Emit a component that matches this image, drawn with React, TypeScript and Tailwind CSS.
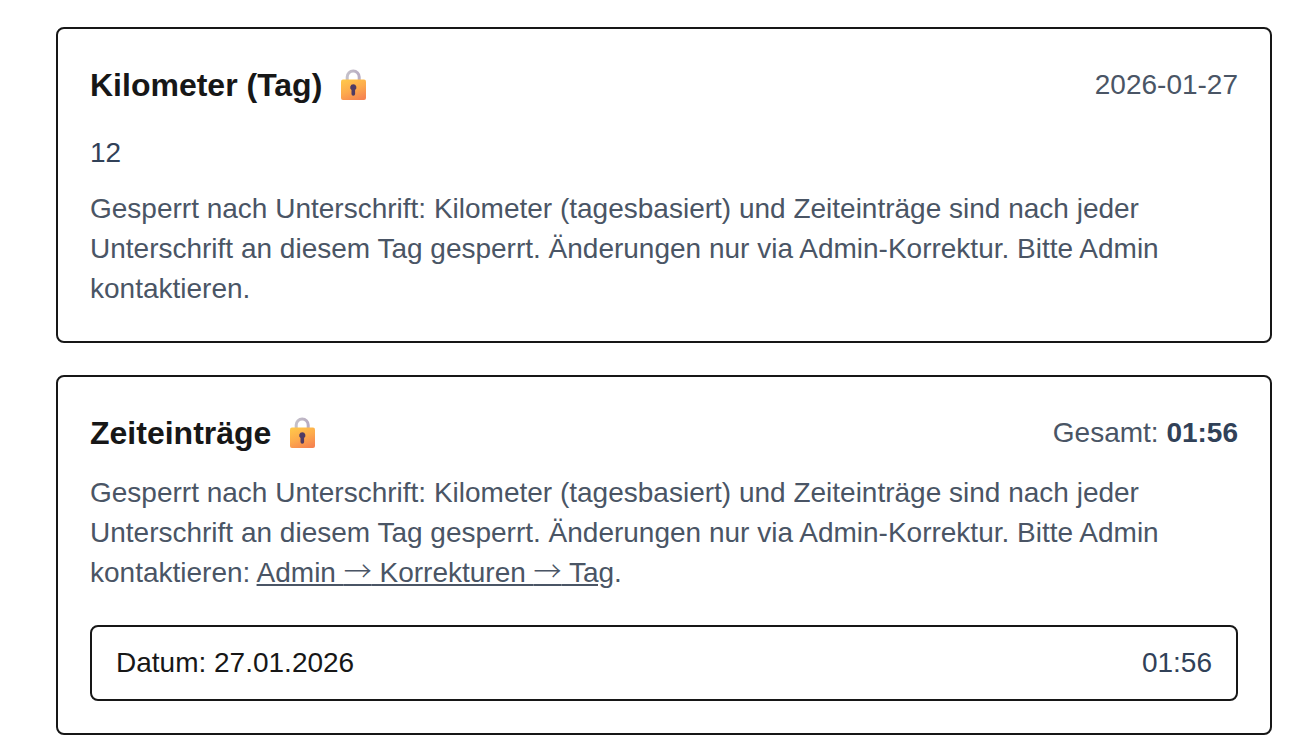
import { useId, type ReactNode } from "react";

const LOCK_NOTICE =
  "Gesperrt nach Unterschrift: Kilometer (tagesbasiert) und Zeiteinträge sind nach jeder Unterschrift an diesem Tag gesperrt. Änderungen nur via Admin-Korrektur. Bitte Admin kontaktieren";

const LockIcon = () => {
  const id = useId();

  return (
    <svg width="26" height="32" viewBox="0 0 26 32" role="img" aria-label="Gesperrt">
      <defs>
        <linearGradient id={`${id}-body`} x1="0.2" y1="0" x2="0.7" y2="1">
          <stop offset="0" stopColor="#ffc64a" />
          <stop offset="0.5" stopColor="#fdab4c" />
          <stop offset="1" stopColor="#f68450" />
        </linearGradient>
        <linearGradient id={`${id}-shackle`} x1="0" y1="0" x2="1" y2="0">
          <stop offset="0" stopColor="#c4c0c9" />
          <stop offset="1" stopColor="#b9adc2" />
        </linearGradient>
      </defs>
      <path
        d="M7.2 13V8a6 6 0 0 1 12 0v5"
        fill="none"
        stroke={`url(#${id}-shackle)`}
        strokeWidth="3"
      />
      <rect x="1" y="10.5" width="25" height="20.5" rx="2" fill={`url(#${id}-body)`} />
      <path
        d="M13.3 15.2a3.2 3.2 0 0 0-1.8 5.8v4a1.8 1.8 0 0 0 3.6 0v-4a3.2 3.2 0 0 0-1.8-5.8z"
        fill="#4f3b64"
      />
    </svg>
  );
};

// leading-none keeps the taller CJK metrics from stretching the line
const Arrow = () => (
  <span className="font-['Noto_Sans_CJK_JP',sans-serif] leading-none font-light">→</span>
);

type CardProps = {
  title: string;
  aside: ReactNode;
  children: ReactNode;
};

const Card = ({ title, aside, children }: CardProps) => (
  <section className="rounded-lg border-2 border-neutral-900 bg-white p-8">
    <div className="flex items-center justify-between">
      <h2 className="flex items-center gap-[18px] text-[32px] leading-[48px] font-semibold text-neutral-900">
        {title}
        <LockIcon />
      </h2>
      <div className="text-[#4a5565]">{aside}</div>
    </div>
    {children}
  </section>
);

const App = () => {
  return (
    <main className="flex flex-col gap-8 bg-white pt-[27px] pr-[29px] pl-14 font-['Liberation_Sans',Arial,sans-serif] text-[28px] leading-10">
      {/* Kilometers per day */}
      <Card title="Kilometer (Tag)" aside="2026-01-27">
        <div className="mt-6 text-slate-700">12</div>
        <p className="mt-4 text-[#4a5565]">{`${LOCK_NOTICE}.`}</p>
      </Card>

      {/* Time entries */}
      <Card
        title="Zeiteinträge"
        aside={
          <>
            Gesamt: <span className="font-semibold text-slate-700">01:56</span>
          </>
        }
      >
        <p className="mt-4 text-[#4a5565]">
          {`${LOCK_NOTICE}: `}
          <a href="#korrekturen" className="underline">
            Admin <Arrow /> Korrekturen <Arrow /> Tag
          </a>
          .
        </p>
        <div className="mt-8 flex items-center justify-between rounded-lg border-2 border-neutral-900 px-6 py-4">
          <span className="text-neutral-900">Datum: 27.01.2026</span>
          <span className="text-slate-700">01:56</span>
        </div>
      </Card>
    </main>
  );
};

export default App;
